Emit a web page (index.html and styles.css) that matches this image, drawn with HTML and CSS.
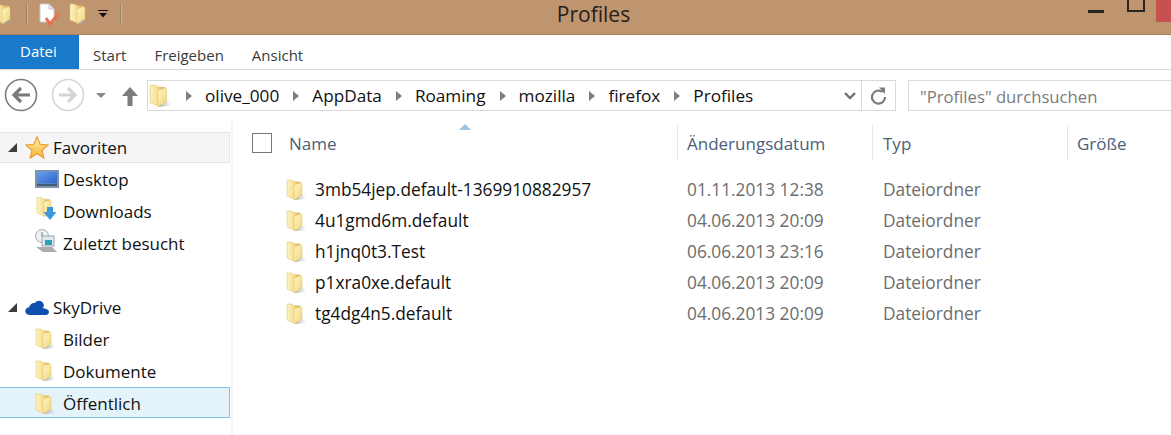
FILE: index.html
```html
<!DOCTYPE html>
<html lang="de">
<head>
  <meta charset="UTF-8">
  <title>Profiles</title>
  <link rel="stylesheet" href="styles.css">
</head>
<body>
  <svg class="defs" width="0" height="0">
    <defs>
      <linearGradient id="folderBack" x1="0" y1="0" x2="1" y2="0">
        <stop offset="0" stop-color="#fdf3c0"/>
        <stop offset=".45" stop-color="#f7e29a"/>
        <stop offset="1" stop-color="#d9b144"/>
      </linearGradient>
      <linearGradient id="folderFront" x1="0" y1="0" x2="1" y2="1">
        <stop offset="0" stop-color="#fff4c0"/>
        <stop offset="1" stop-color="#f2d67e"/>
      </linearGradient>
      <linearGradient id="folderShade" x1="0" y1="0" x2="1" y2="0">
        <stop offset="0" stop-color="#a8a8a8" stop-opacity=".9"/>
        <stop offset="1" stop-color="#a8a8a8" stop-opacity="0"/>
      </linearGradient>
      <linearGradient id="starFill" x1="0" y1="0" x2="0" y2="1">
        <stop offset="0" stop-color="#fff0a8"/>
        <stop offset="1" stop-color="#f9b42e"/>
      </linearGradient>
      <linearGradient id="screenFill" x1="0" y1="0" x2="1" y2="1">
        <stop offset="0" stop-color="#6aa2ee"/>
        <stop offset="1" stop-color="#2a62c8"/>
      </linearGradient>
      <symbol id="folder" viewBox="0 0 20 22">
        <path d="M9 16 L15 15 L20 18 L20 20 L9 21 Z" fill="url(#folderShade)"/>
        <path d="M1 1 L6 1 L7 2.500 L14 3 L14 16 L8 20 L1 17 Z" fill="url(#folderBack)" stroke="#dcbc62" stroke-width=".5"/>
        <path d="M8 6 L15 3.500 L16 5 L16 16 L8 21 Z" fill="url(#folderFront)" stroke="#dfc168" stroke-width=".5"/>
      </symbol>
    </defs>
  </svg>

  <!-- Title bar -->
  <header class="titlebar">
    <div class="quick">
      <svg class="folder-clip" width="13" height="22"><use href="#folder" x="-6" width="20" height="22"/></svg>
      <span class="sep"></span>
      <svg class="qa-doc" width="21" height="23" viewBox="0 0 21 23">
        <path d="M1 1 L10 1 L15 6 L15 19 L1 19 Z" fill="#fff" stroke="#c9c9c9"/>
        <path d="M10 1 L10 6 L15 6" fill="#dfe3ea" stroke="#c9c9c9"/>
        <path d="M7 15 L11 21 L20 10" fill="none" stroke="#e8734a" stroke-width="3"/>
      </svg>
      <svg class="qa-folder" width="17" height="24"><use href="#folder" width="20" height="24"/></svg>
      <svg class="qa-arrow" width="10" height="8" viewBox="0 0 10 8">
        <rect x="0" y="0" width="10" height="1" fill="#111"/>
        <path d="M1 3 L9 3 L5 7.500 Z" fill="#111"/>
      </svg>
      <span class="sep sep-last"></span>
    </div>
    <div class="title">Profiles</div>
    <div class="winctl">
      <span class="win-min"></span>
      <span class="win-max"></span>
      <span class="win-close"></span>
    </div>
  </header>

  <!-- Ribbon tabs -->
  <nav class="tabs">
    <a class="tab tab-file">Datei</a>
    <a class="tab">Start</a>
    <a class="tab">Freigeben</a>
    <a class="tab">Ansicht</a>
  </nav>

  <!-- Address row -->
  <div class="addressrow">
    <svg class="nav-btn" width="34" height="34" viewBox="0 0 34 34">
      <circle cx="17" cy="17" r="15.500" fill="#fff" stroke="#7a7a7a" stroke-width="1.600"/>
      <path d="M26 17 L10 17 M17 10 L10 17 L17 24" fill="none" stroke="#7a7a7a" stroke-width="3.200"/>
    </svg>
    <svg class="nav-btn nav-fwd" width="34" height="34" viewBox="0 0 34 34">
      <circle cx="17" cy="17" r="15.500" fill="#fff" stroke="#d4d4d4" stroke-width="1.600"/>
      <path d="M8 17 L24 17 M17 10 L24 17 L17 24" fill="none" stroke="#d4d4d4" stroke-width="3.200"/>
    </svg>
    <svg class="nav-drop" width="10" height="6" viewBox="0 0 10 6"><path d="M0 0 L10 0 L5 5 Z" fill="#8a8a8a"/></svg>
    <svg class="nav-up" width="16" height="19" viewBox="0 0 16 19">
      <path d="M8 0 L16 9 L10.500 9 L10.500 19 L5.500 19 L5.500 9 L0 9 Z" fill="#7d7d7d"/>
    </svg>
    <div class="pathbox">
      <svg class="path-folder" width="24" height="24"><use href="#folder" width="22" height="24"/></svg>
      <div class="crumbs">
        <span class="crumb">olive_000</span>
        <span class="crumb">AppData</span>
        <span class="crumb">Roaming</span>
        <span class="crumb">mozilla</span>
        <span class="crumb">firefox</span>
        <span class="crumb">Profiles</span>
      </div>
      <svg class="path-drop" width="12" height="8" viewBox="0 0 12 8"><path d="M1 1 L6 6 L11 1" fill="none" stroke="#707070" stroke-width="2.400"/></svg>
      <div class="refresh">
        <svg width="17" height="18" viewBox="0 0 17 18">
          <path d="M12.500 5 A6.500 6.500 0 1 0 15 10" fill="none" stroke="#7a7a7a" stroke-width="2.200"/>
          <path d="M9 0.500 L15 0.500 L15 7 Z" fill="#7a7a7a"/>
        </svg>
      </div>
    </div>
    <div class="searchbox">"Profiles" durchsuchen</div>
  </div>

  <div class="main">
    <!-- Navigation pane -->
    <aside class="sidebar">
      <div class="group-head is-hover">
        <span class="twisty"></span>
        <svg class="head-icon" width="24" height="24" viewBox="0 0 24 24">
          <path d="M12 1 L15.200 8.300 L23 9 L17 14.200 L18.900 22 L12 17.800 L5.100 22 L7 14.200 L1 9 L8.800 8.300 Z" fill="url(#starFill)" stroke="#ec9a3c" stroke-width="1.200"/>
        </svg>
        <span>Favoriten</span>
      </div>
      <div class="nav-item">
        <svg class="item-icon icon-desktop" width="24" height="18" viewBox="0 0 24 18">
          <rect x="0" y="0" width="24" height="18" fill="#7f93ad"/>
          <rect x="2" y="1.500" width="20" height="12" fill="url(#screenFill)"/>
          <rect x="2" y="14" width="20" height="2" fill="#46586e"/>
        </svg>
        <span>Desktop</span>
      </div>
      <div class="nav-item">
        <svg class="item-icon icon-downloads" width="21" height="25" viewBox="0 0 21 25">
          <use href="#folder" width="19" height="22"/>
          <path d="M11 11 L17 11 L17 16 L20.500 16 L14 24 L7.500 16 L11 16 Z" fill="#3b97dd"/>
        </svg>
        <span>Downloads</span>
      </div>
      <div class="nav-item">
        <svg class="item-icon icon-recent" width="24" height="24" viewBox="0 0 24 24">
          <circle cx="8" cy="7" r="6.500" fill="#eef1f3" stroke="#a8adb2"/>
          <path d="M8 3 L8 7 L11 8" fill="none" stroke="#777"/>
          <rect x="8" y="7" width="12" height="10" fill="#dfe9ee" stroke="#9aa5ab"/>
          <rect x="11" y="11" width="7" height="5" fill="#2f9fb5"/>
          <path d="M2 18 L18 18 L23 23 L9 23 Z" fill="#a9aeb2"/>
        </svg>
        <span>Zuletzt besucht</span>
      </div>

      <div class="group-head group-drive">
        <span class="twisty"></span>
        <svg class="head-icon" width="24" height="15" viewBox="0 0 24 15">
          <path d="M5 15 C1 15 0 12 0.500 10 C1 8 3 7.500 4 7.500 C5 3.500 8 2.500 10 3 C12 0 17 0 18.500 4 C20 8 17 8 16 8 C19 8 24 9 24 12 C24 14 22 15 21 15 Z" fill="#0f4fb0"/>
        </svg>
        <span>SkyDrive</span>
      </div>
      <div class="nav-item">
        <svg class="item-icon" width="20" height="22"><use href="#folder" width="20" height="22"/></svg>
        <span>Bilder</span>
      </div>
      <div class="nav-item">
        <svg class="item-icon" width="20" height="22"><use href="#folder" width="20" height="22"/></svg>
        <span>Dokumente</span>
      </div>
      <div class="nav-item is-selected">
        <svg class="item-icon" width="20" height="22"><use href="#folder" width="20" height="22"/></svg>
        <span>Öffentlich</span>
      </div>
    </aside>

    <!-- File list -->
    <section class="files">
      <span class="sort-arrow"></span>
      <div class="list-head">
        <div class="col col-name"><span class="checkbox"></span><span>Name</span></div>
        <div class="col col-date">Änderungsdatum</div>
        <div class="col col-type">Typ</div>
        <div class="col col-size">Größe</div>
      </div>
      <div class="file-row">
        <div class="cell-name"><svg width="20" height="22"><use href="#folder" width="20" height="22"/></svg><span>3mb54jep.default-1369910882957</span></div>
        <div class="cell-date">01.11.2013 12:38</div>
        <div class="cell-type">Dateiordner</div>
      </div>
      <div class="file-row">
        <div class="cell-name"><svg width="20" height="22"><use href="#folder" width="20" height="22"/></svg><span>4u1gmd6m.default</span></div>
        <div class="cell-date">04.06.2013 20:09</div>
        <div class="cell-type">Dateiordner</div>
      </div>
      <div class="file-row">
        <div class="cell-name"><svg width="20" height="22"><use href="#folder" width="20" height="22"/></svg><span>h1jnq0t3.Test</span></div>
        <div class="cell-date">06.06.2013 23:16</div>
        <div class="cell-type">Dateiordner</div>
      </div>
      <div class="file-row">
        <div class="cell-name"><svg width="20" height="22"><use href="#folder" width="20" height="22"/></svg><span>p1xra0xe.default</span></div>
        <div class="cell-date">04.06.2013 20:09</div>
        <div class="cell-type">Dateiordner</div>
      </div>
      <div class="file-row">
        <div class="cell-name"><svg width="20" height="22"><use href="#folder" width="20" height="22"/></svg><span>tg4dg4n5.default</span></div>
        <div class="cell-date">04.06.2013 20:09</div>
        <div class="cell-type">Dateiordner</div>
      </div>
    </section>
  </div>
</body>
</html>
```

FILE: styles.css
```css
html, body {
  margin: 0;
  padding: 0;
  height: 435px;
  overflow: hidden;
}
body {
  font-family: 'Open Sans', 'Noto Sans', sans-serif;
  font-size: 17px;
  background: #fff;
  color: #111;
}
.defs {
  display: block;
  height: 0;
}

/* title bar */
.titlebar {
  height: 34px;
  background: #bf9570;
  border-bottom: 1px solid #a68058;
  display: flex;
  position: relative;
}
.quick {
  display: flex;
  align-items: center;
  height: 28px;
}
.folder-clip {
  margin-right: 13px;
}
.sep {
  width: 1px;
  height: 22px;
  background: #9c8469;
  box-shadow: 1px 0 0 #d0ad8d;
}
.qa-doc {
  margin-left: 12px;
}
.qa-folder {
  margin-left: 9px;
}
.qa-arrow {
  margin-left: 12px;
}
.sep-last {
  margin-left: 12px;
}
.title {
  position: absolute;
  left: 0;
  right: 0;
  top: 0;
  line-height: 28px;
  font-size: 21px;
  text-align: center;
  padding-left: 16px;
  color: #262019;
}
.winctl {
  margin-left: auto;
  display: flex;
  align-items: flex-start;
}
.win-min {
  width: 16px;
  height: 3px;
  margin-top: 10px;
  background: #2a2420;
}
.win-max {
  width: 14px;
  height: 10px;
  margin-left: 23px;
  border: 2px solid #2a2420;
  border-top: none;
}
.win-close {
  width: 15px;
  height: 22px;
  margin-left: 11px;
  background: #c75050;
}

/* ribbon tabs */
.tabs {
  height: 34px;
  display: flex;
  border-bottom: 1px solid #d9d9d9;
}
.tab {
  padding: 0 14px;
  line-height: 41px;
  font-size: 15px;
  color: #3b3b3b;
}
.tab-file {
  width: 79px;
  box-sizing: border-box;
  padding: 0 0 0 20px;
  line-height: 33px;
  color: #fff;
  background: #1979ca;
}

/* address row */
.addressrow {
  height: 41px;
  padding-top: 10px;
  display: flex;
  align-items: flex-start;
}
.nav-btn {
  margin-left: 4px;
  margin-top: -2px;
}
.nav-fwd {
  margin-left: 13px;
}
.nav-drop {
  margin: 13px 0 0 11px;
}
.nav-up {
  margin: 7px 0 0 16px;
}
.pathbox {
  width: 747px;
  height: 29px;
  margin-left: 9px;
  border: 1px solid #d9d9d9;
  display: flex;
  align-items: center;
}
.path-folder {
  margin-left: 1px;
}
.crumbs {
  display: flex;
  font-size: 17.200px;
}
.crumb {
  margin-left: 14px;
  display: flex;
  align-items: center;
}
.crumb:first-child {
  margin-left: 13px;
}
.crumb::before {
  content: "";
  border-left: 6px solid #7e7e7e;
  border-top: 5px solid transparent;
  border-bottom: 5px solid transparent;
  margin-right: 13px;
}
.path-drop {
  margin-left: auto;
  margin-right: 5px;
}
.refresh {
  width: 33px;
  height: 29px;
  border-left: 1px solid #d9d9d9;
  display: flex;
  align-items: center;
  justify-content: center;
}
.searchbox {
  flex: 1;
  height: 29px;
  margin-left: 12px;
  padding-left: 11px;
  border: 1px solid #d9d9d9;
  border-right: none;
  line-height: 31px;
  font-size: 16.700px;
  color: #7b7b7b;
}

/* navigation pane */
.main {
  display: flex;
}
.sidebar {
  width: 233px;
  height: 315px;
  box-sizing: border-box;
  padding-top: 11px;
  border-right: 2px solid #f4f4f4;
  flex: none;
}
.group-head {
  height: 31px;
  display: flex;
  align-items: center;
  padding-left: 8px;
  box-sizing: border-box;
}
.is-hover {
  background: #f5f5f5;
  border: 1px solid #e4e4e4;
  border-left: none;
  margin-right: 1px;
}
.group-drive {
  margin-top: 33px;
  height: 32px;
}
.twisty {
  width: 0;
  height: 0;
  border-bottom: 9px solid #3c3c3c;
  border-left: 9px solid transparent;
  margin-right: 8px;
}
.head-icon {
  margin-right: 4px;
}
.nav-item {
  height: 31px;
  margin-bottom: 1px;
  padding-top: 2px;
  padding-left: 63px;
  display: flex;
  align-items: center;
  position: relative;
  box-sizing: border-box;
}
.item-icon {
  position: absolute;
  left: 35px;
  top: 5px;
}
.icon-desktop {
  top: 7px;
}
.icon-downloads {
  left: 36px;
  top: 1px;
}
.icon-recent {
  left: 34px;
  top: 2px;
}
.is-selected {
  background: #e4f2fa;
  border: 1px solid #7cc4e8;
  border-left: none;
  margin-right: 1px;
}

/* file list */
.files {
  flex: 1;
  position: relative;
  padding-top: 4px;
}
.sort-arrow {
  position: absolute;
  left: 226px;
  top: 3px;
  border-bottom: 6px solid #9cc5de;
  border-left: 6px solid transparent;
  border-right: 6px solid transparent;
}
.list-head {
  display: grid;
  grid-template-columns: 444px 195px 195px 1fr;
  height: 36px;
  color: #4c607a;
  margin-bottom: 13px;
}
.col {
  display: flex;
  align-items: center;
  padding-left: 9px;
  border-left: 1px solid #e3e9f0;
}
.col-name {
  border-left: none;
  padding-left: 19px;
  gap: 17px;
}
.col-type {
  padding-left: 10px;
}
.checkbox {
  width: 18px;
  height: 18px;
  border: 1px solid #777;
}
.file-row {
  display: grid;
  grid-template-columns: 444px 195px 1fr;
  height: 31px;
  align-items: center;
  font-size: 17.300px;
}
.cell-name {
  display: flex;
  align-items: center;
  gap: 9px;
  padding-left: 53px;
}
.cell-date {
  padding-left: 10px;
  color: #6d6d6d;
}
.cell-type {
  padding-left: 11px;
  color: #6d6d6d;
}
```
